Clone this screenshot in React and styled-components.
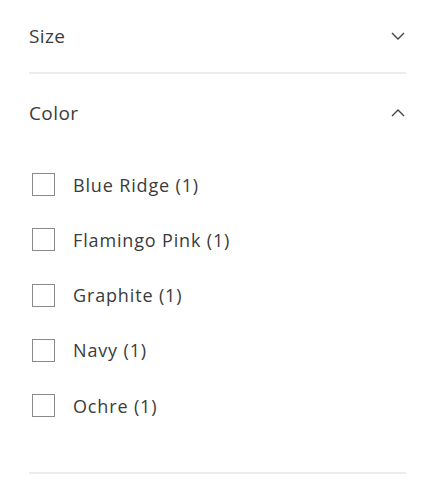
import React from "react";
import styled, { createGlobalStyle } from "styled-components";

const Global = createGlobalStyle`
  html, body { margin: 0; padding: 0; background: #fff; }
  body { font-family: "Open Sans", "Liberation Sans", sans-serif; color: #3b3b3b; }
  * { box-sizing: border-box; }
`;

const Panel = styled.div`
  padding: 0 16px 0 29px;
`;

const Section = styled.section`
  border-bottom: 2px solid #ececec;
`;

const Summary = styled.div`
  display: flex;
  align-items: center;
  justify-content: space-between;
  height: ${(p) => p.$h}px;
  font-size: 19px;
  letter-spacing: 0.4px;
  color: #3b3b3b;
`;

const Chevron = styled.svg`
  width: 14px;
  height: 8px;
  margin-right: 1px;
  flex: none;
`;

const List = styled.ul`
  list-style: none;
  margin: 0;
  padding: 22px 0 55px 3px;
  display: flex;
  flex-direction: column;
  gap: 32.3px;
`;

const Item = styled.li`
  display: flex;
  align-items: center;
  gap: 18px;
  height: 23px;
  font-size: 18px;
  letter-spacing: 0.85px;
  color: #3b3b3b;
`;

const Box = styled.span`
  width: 23px;
  height: 23px;
  border: 1px solid #8a8a8a;
  flex: none;
`;

const Down = () => (
  <Chevron viewBox="0 0 14 8" fill="none">
    <path d="M1 1l6 6 6-6" stroke="#444" strokeWidth="1.4" />
  </Chevron>
);
const Up = () => (
  <Chevron viewBox="0 0 14 8" fill="none">
    <path d="M1 7l6-6 6 6" stroke="#444" strokeWidth="1.4" />
  </Chevron>
);

const colors = ["Blue Ridge (1)", "Flamingo Pink (1)", "Graphite (1)", "Navy (1)", "Ochre (1)"];

export default function App() {
  return (
    <Panel>
      <Global />
      <Section>
        <Summary $h={72}>
          <span>Size</span>
          <Down />
        </Summary>
      </Section>
      <Section>
        <Summary $h={77}>
          <span>Color</span>
          <Up />
        </Summary>
        <List>
          {colors.map((c) => (
            <Item key={c}>
              <Box />
              <span>{c}</span>
            </Item>
          ))}
        </List>
      </Section>
    </Panel>
  );
}
